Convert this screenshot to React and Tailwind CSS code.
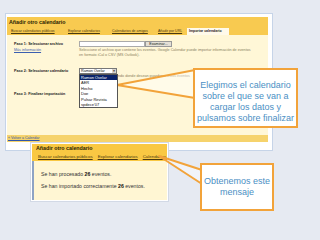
const topTabs = [
  { label: 'Buscar calendarios públicos', w: 'w-[57px]' },
  { label: 'Explorar calendarios', w: 'w-[44px]' },
  { label: 'Calendarios de amigos', w: 'w-[46px]' },
  { label: 'Añadir por URL', w: 'w-[29px]' },
];

const calendars = ['Ramon Ovelar', 'AER', 'Hecho', 'Doe', 'Pulsar Revista', 'spdece\'07'];

const Callout = ({ className, lines }) => (
  <div
    className={`absolute bg-white border-2 border-[#f2a33a] flex flex-col items-center justify-center text-[9px] leading-[11px] text-[#4b8fc4] ${className}`}
  >
    {lines.map((l) => (
      <span key={l} className="whitespace-nowrap">{l}</span>
    ))}
  </div>
);

export default function App() {
  return (
    <div className="relative w-[320px] h-[240px] overflow-hidden bg-[#e6eaf2] font-['Liberation_Sans',Arial,sans-serif]">
      {/* first screenshot */}
      <div className="absolute left-[5px] top-[13px] w-[268px] h-[138px] bg-white border border-[#c6d4e8] pt-[3px] pl-[1px] pr-[4px] flex flex-col">
        <div className="bg-[#f8ca50]">
          <div className="h-[10px] pl-[2px] pt-[2px] text-[5.3px] leading-[7px] font-bold text-[#2a2200]">
            Añadir otro calendario
          </div>
          <div className="h-[8px] flex items-end text-[3.5px] leading-[6px] text-[#4a3a10]">
            <div className="w-[4px]" />
            {topTabs.map((t) => (
              <div key={t.label} className={`${t.w} h-[7px] underline whitespace-nowrap`}>
                {t.label}
              </div>
            ))}
            <div className="w-[42px] h-[7px] bg-[#fffaea] pl-[2px] font-bold text-[#222] whitespace-nowrap">
              Importar calendario
            </div>
          </div>
        </div>

        <div className="relative h-[100px] bg-[#fff7d7] pl-[7px] pt-[6px] text-[3.7px] leading-[5px]">
          <div className="flex">
            <div className="w-[65px] pt-[1px]">
              <div className="font-bold text-[#222] whitespace-nowrap">Paso 1: Seleccionar archivo</div>
              <div className="mt-[1px] text-[#3b5fb0] underline">Más información</div>
            </div>
            <div>
              <div className="flex">
                <div className="w-[66px] h-[6px] bg-white border border-[#aaa]" />
                <div className="w-[27px] h-[6px] bg-[#e4e0d6] border border-[#999] text-center leading-[4px] text-[#222]">
                  Examinar...
                </div>
              </div>
              <div className="mt-[1px] text-[#8a8060] leading-[5px] whitespace-nowrap">
                Seleccione el archivo que contiene los eventos. Google Calendar puede importar información de eventos
                <br />
                en formato iCal o CSV (MS Outlook).
              </div>
            </div>
          </div>

          <div className="flex mt-[10px]">
            <div className="w-[65px] pt-[1px] font-bold text-[#222] whitespace-nowrap">Paso 2: Seleccionar calendario</div>
            <div className="relative">
              <div className="w-[38px] h-[6px] bg-white border border-[#777] flex items-center justify-between pl-[1px] text-[#111]">
                <span className="whitespace-nowrap">Ramon Ovelar</span>
                <span className="w-[4px] h-[4px] bg-[#d8d4cc] text-[3px] leading-[4px] text-center">▼</span>
              </div>
              <div className="absolute left-0 top-[6px] w-[39px] bg-white border border-[#555] z-10 text-[4px]">
                {calendars.map((c, i) => (
                  <div
                    key={c}
                    className={`h-[5.4px] pl-[1px] leading-[5.4px] whitespace-nowrap ${
                      i === 0 ? 'bg-[#0a246a] text-white' : 'text-[#111]'
                    }`}
                  >
                    {c}
                  </div>
                ))}
              </div>
            </div>
            <div className="pl-[1px] pt-[6px] text-[#8a8060] whitespace-nowrap">
              ndo donde desean guardarse estos eventos
            </div>
          </div>

          <div className="mt-[13px] font-bold text-[#222]">Paso 3: Finalizar importación</div>
        </div>

        <div className="h-[7px] bg-[#f6d36c] pl-[1px] text-[3.6px] leading-[7px] text-[#2f56a8] underline">
          « Volver a Calendar
        </div>
        <div className="flex-1 bg-white" />
      </div>

      {/* second screenshot */}
      <div className="absolute left-[30px] top-[142px] w-[139px] h-[60px] bg-white border border-[#d2d9e6] p-[1px] flex flex-col">
        <div className="bg-[#f9c843]">
          <div className="h-[9px] pl-[4px] pt-[1px] text-[5.3px] leading-[7px] font-bold text-[#2a2200]">
            Añadir otro calendario
          </div>
          <div className="h-[8px] flex items-center pl-[6px] gap-[5px] text-[4.4px] leading-[6px] text-[#4a3a10] whitespace-nowrap overflow-hidden">
            <span className="underline">Buscar calendarios públicos</span>
            <span className="underline">Explorar calendarios</span>
            <span className="underline">Calendarios de amigos</span>
          </div>
        </div>
        <div className="flex-1 flex bg-[#fff6d3]">
          <div className="w-[2px] bg-[#8ea3c4]" />
          <div className="flex-1 pl-[7px] pt-[10px] text-[5.2px] leading-[6px] text-[#333]">
            <div>
              Se han procesado <b className="text-[#111]">26</b> eventos.
            </div>
            <div className="mt-[6px]">
              Se han importado correctamente <b className="text-[#111]">26</b> eventos.
            </div>
          </div>
        </div>
      </div>

      {/* callout pointers */}
      <svg className="absolute inset-0 pointer-events-none" width="320" height="240" viewBox="0 0 320 240">
        <polygon points="117,85 195,70 195,98" fill="#ffffff" fillOpacity="0.45" stroke="#f2a33a" strokeWidth="2" strokeLinejoin="round" />
        <polygon points="159,156 202,170 202,184" fill="#ffffff" fillOpacity="0.45" stroke="#f2a33a" strokeWidth="2" strokeLinejoin="round" />
      </svg>

      <Callout
        className="left-[193px] top-[68px] w-[105px] h-[60px] pt-[8px]"
        lines={['Elegimos el calendario', 'sobre el que se van a', 'cargar los datos y', 'pulsamos sobre finalizar']}
      />
      <Callout
        className="left-[200px] top-[163px] w-[74px] h-[48px]"
        lines={['Obtenemos este', 'mensaje']}
      />
    </div>
  );
}
